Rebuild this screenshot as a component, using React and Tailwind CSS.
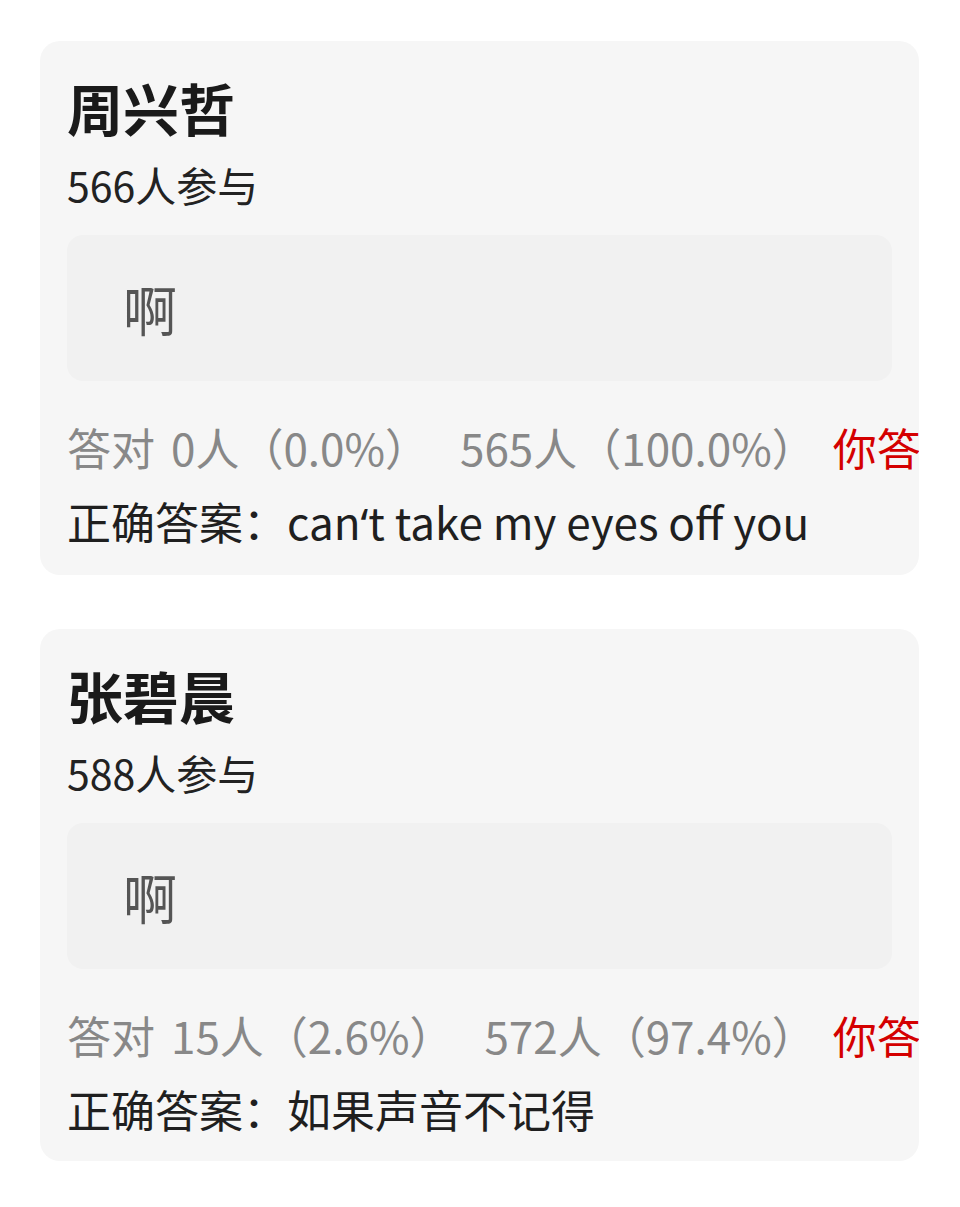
const questions = [
  {
    singer: '周兴哲',
    count: 566,
    answer: '啊',
    right: '0人（0.0%）',
    wrong: '565人（100.0%）',
    correct: (
      <>
        can<span style={{ fontFamily: '"Noto Sans", sans-serif' }}>‘</span>t take my eyes off you
      </>
    ),
  },
  {
    singer: '张碧晨',
    count: 588,
    answer: '啊',
    right: '15人（2.6%）',
    wrong: '572人（97.4%）',
    correct: '如果声音不记得',
  },
]

export default function App() {
  return (
    <div
      className="min-h-[1207px] bg-white pt-[41px] px-[40px] flex flex-col gap-[54px]"
      style={{ fontFamily: '"Noto Sans CJK SC", "Noto Sans", sans-serif' }}
    >
      {questions.map((q) => (
        <QuestionCard key={q.singer} q={q} />
      ))}
    </div>
  )
}

function QuestionCard({ q }) {
  return (
    <div className="w-[879px] bg-[#f6f6f6] rounded-[20px] overflow-hidden px-[27px] pt-[34px] pb-[22px]">
      <h2 className="text-[56px] leading-[64px] font-bold text-[#1a1a1a]">{q.singer}</h2>
      <div className="mt-[22px] text-[41px] leading-[46px] text-[#222]">{q.count}人参与</div>

      <div className="mt-[28px] h-[146px] bg-[#f1f1f1] rounded-[16px] flex items-center pl-[56px]">
        <span className="text-[54px] text-[#555]">{q.answer}</span>
      </div>

      <div className="mt-[36px] flex whitespace-nowrap text-[44px] leading-[60px] text-[#888]">
        <span>答对</span>
        <span className="ml-[16px]">{q.right}</span>
        <span className="ml-[31px]">{q.wrong}</span>
        <span className="ml-[17px] text-[#d40000]">你答错了</span>
      </div>
      <div className="mt-[14px] whitespace-nowrap text-[44px] leading-[60px] text-[#1f1f1f]">
        正确答案：{q.correct}
      </div>
    </div>
  )
}
